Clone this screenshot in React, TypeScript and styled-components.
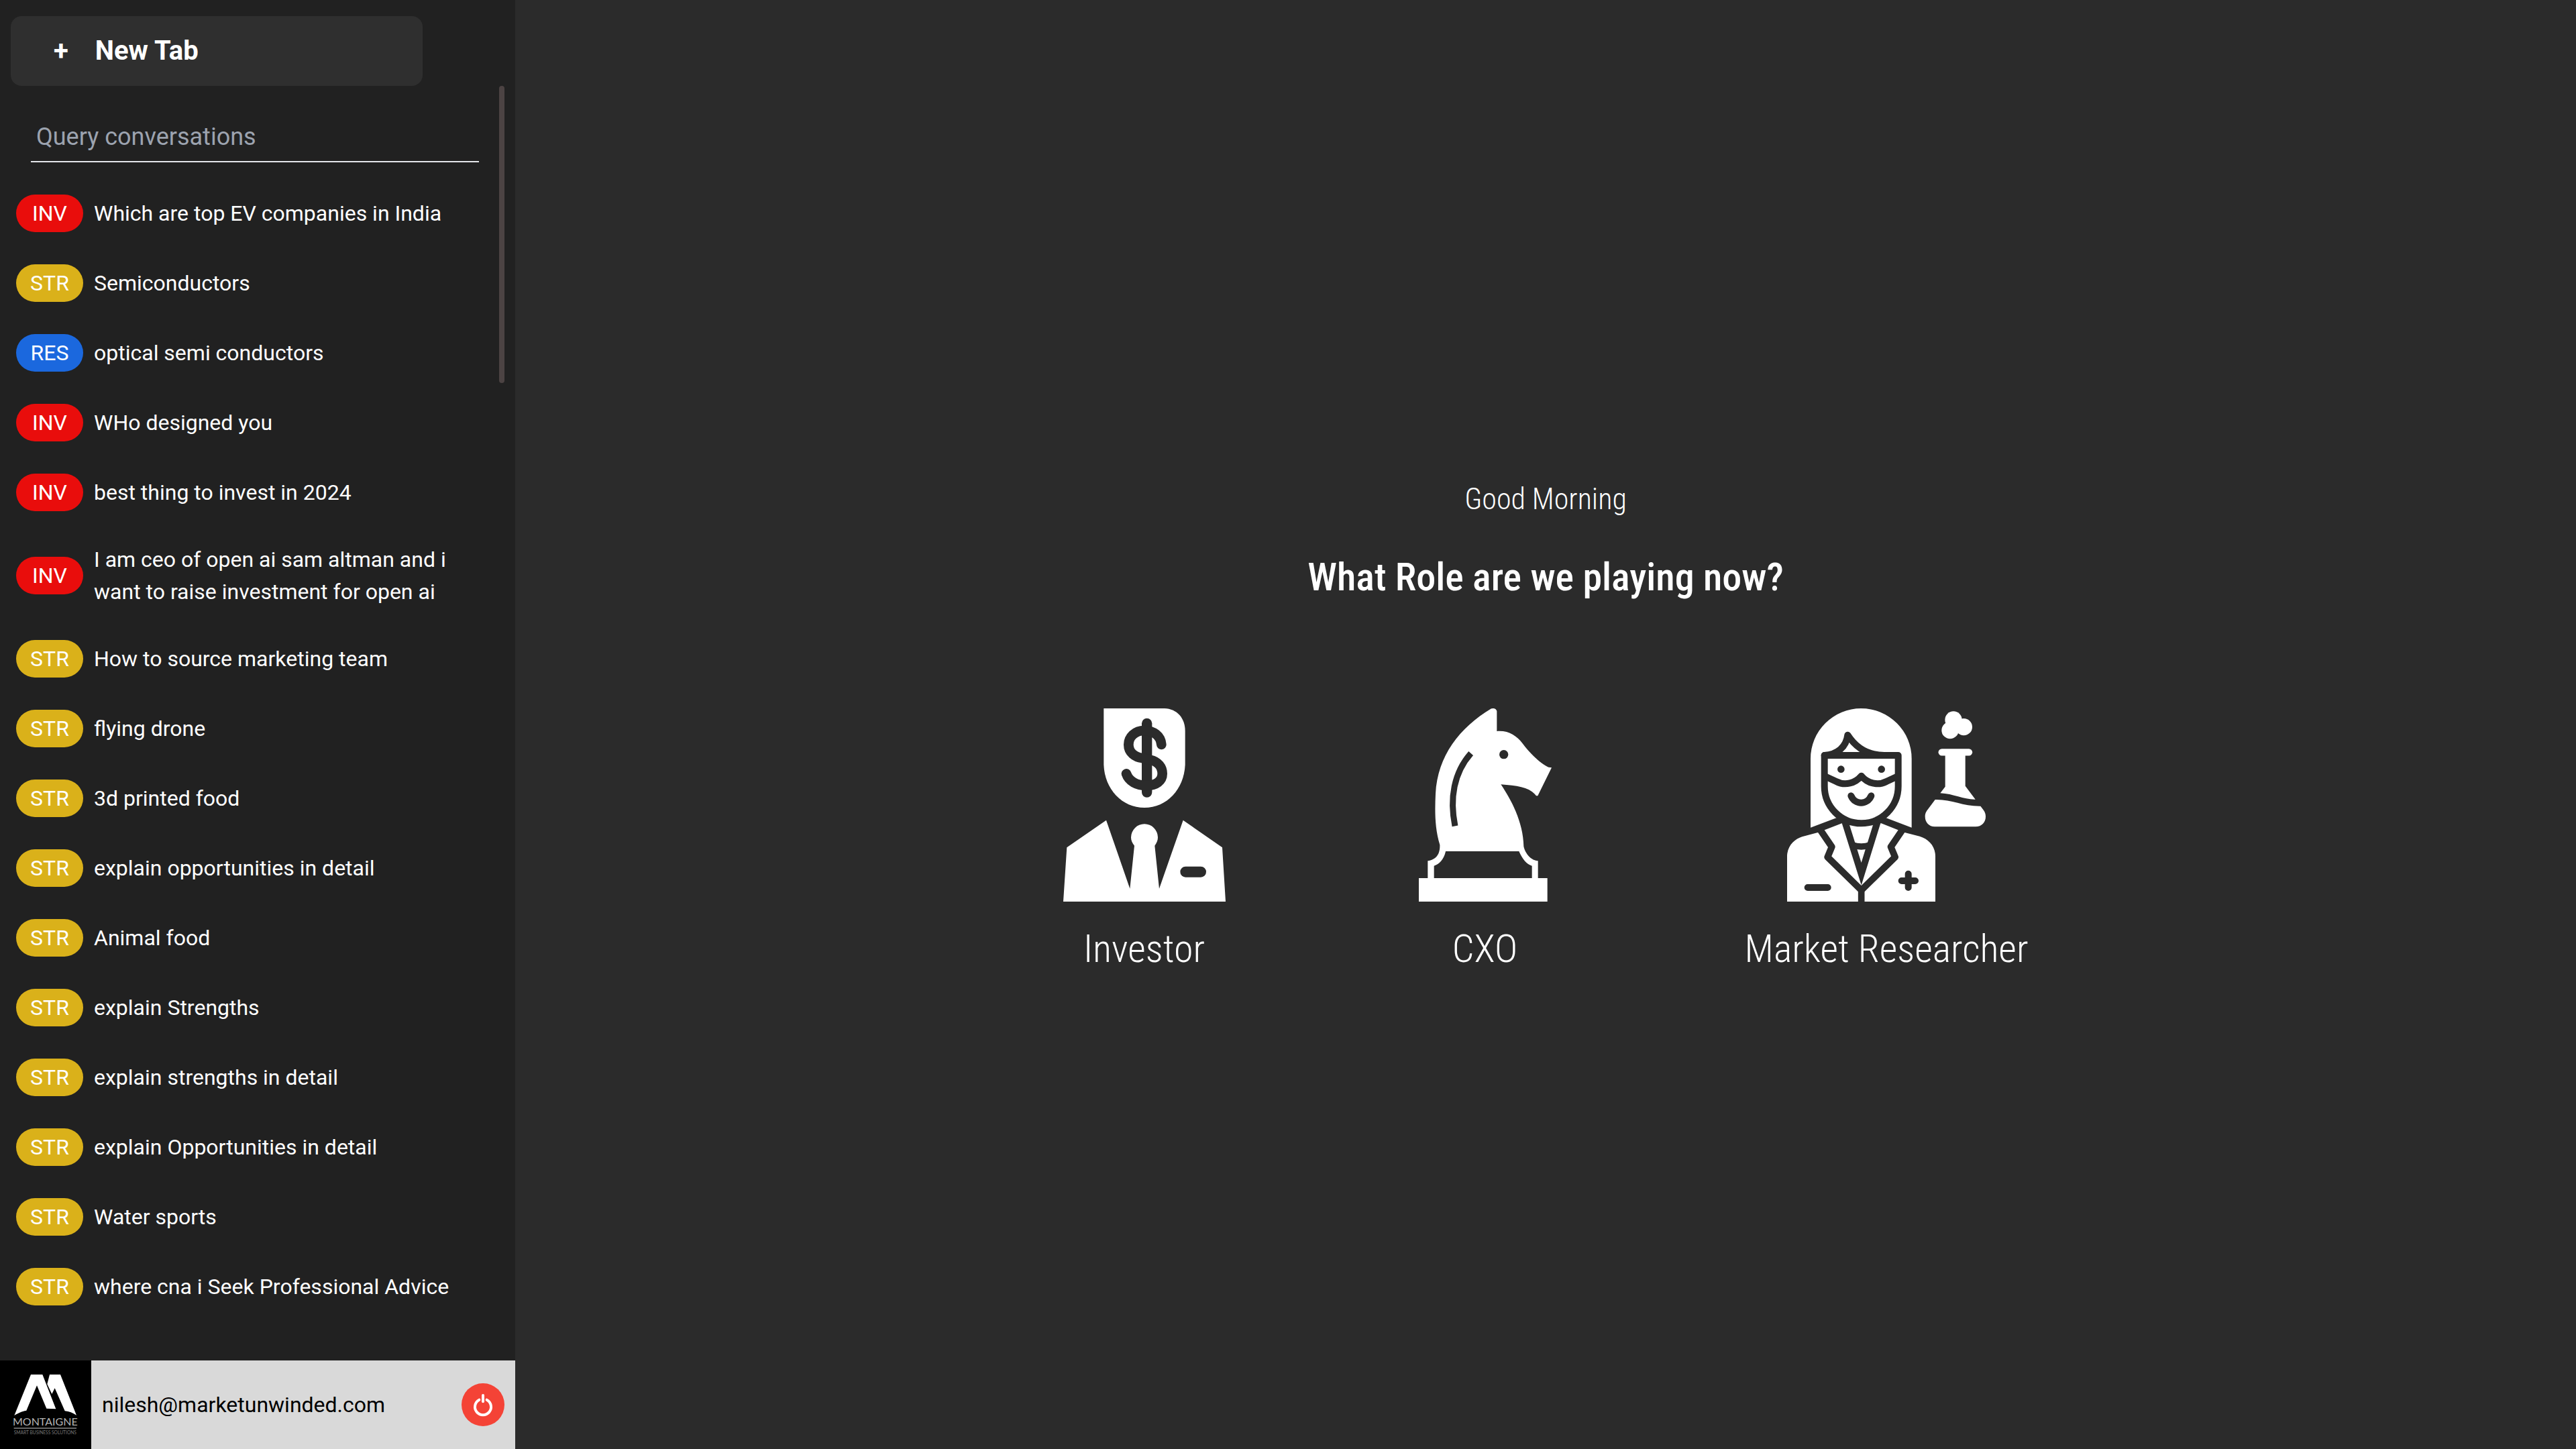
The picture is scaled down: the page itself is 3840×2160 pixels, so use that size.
import React, { useState } from "react";
import styled, { createGlobalStyle } from "styled-components";

type Role = "INV" | "STR" | "RES";

const roleColors: Record<Role, string> = {
  INV: "#e90d0c",
  STR: "#dab11a",
  RES: "#1b68de",
};

const conversations: { role: Role; title: string }[] = [
  { role: "INV", title: "Which are top EV companies in India" },
  { role: "STR", title: "Semiconductors" },
  { role: "RES", title: "optical semi conductors" },
  { role: "INV", title: "WHo designed you" },
  { role: "INV", title: "best thing to invest in 2024" },
  { role: "INV", title: "I am ceo of open ai sam altman and i want to raise investment for open ai" },
  { role: "STR", title: "How to source marketing team" },
  { role: "STR", title: "flying drone" },
  { role: "STR", title: "3d printed food" },
  { role: "STR", title: "explain opportunities in detail" },
  { role: "STR", title: "Animal food" },
  { role: "STR", title: "explain Strengths" },
  { role: "STR", title: "explain strengths in detail" },
  { role: "STR", title: "explain Opportunities in detail" },
  { role: "STR", title: "Water sports" },
  { role: "STR", title: "where cna i Seek Professional Advice" },
];

const surface = "#2b2b2b";

const GlobalStyle = createGlobalStyle`
  *, *::before, *::after { box-sizing: border-box; }
  body {
    margin: 0;
    background: ${surface};
    color: #fff;
    font-family: Roboto, "Liberation Sans", sans-serif;
  }
  button, input { font: inherit; color: inherit; }
  button { border: 0; background: none; padding: 0; cursor: pointer; }
`;

const Page = styled.div`
  display: flex;
  height: 100vh;
`;

const Sidebar = styled.aside`
  display: flex;
  flex-direction: column;
  width: 20%;
  background: #212121;
`;

const NewTabBar = styled.div`
  padding: 24px 16px 0;
`;

const NewTabButton = styled.button`
  display: flex;
  align-items: center;
  gap: 40px;
  width: 614px;
  max-width: 100%;
  height: 104px;
  padding: 0 64px;
  border-radius: 16px;
  background: #2f2f2f;
  font-size: 40px;
  font-weight: 700;
  line-height: 56px;
`;

const History = styled.div`
  display: flex;
  flex: 1;
  min-height: 0;
  padding-right: 16px;
`;

const HistoryContent = styled.div`
  flex: 1;
  min-width: 0;
  overflow: hidden;
`;

const SearchBox = styled.div`
  padding: 40px 30px 24px 46px;
`;

const SearchInput = styled.input`
  display: block;
  width: 100%;
  height: 74px;
  padding: 0 8px;
  border: 0;
  border-bottom: 2px solid #e5e7eb;
  outline: 0;
  background: transparent;
  font-size: 36px;

  &::placeholder {
    color: #9ca3af;
    opacity: 1;
  }
`;

const ConversationList = styled.ul`
  margin: 0;
  padding: 0;
  list-style: none;
`;

const ConversationButton = styled.button`
  display: flex;
  align-items: center;
  gap: 16px;
  width: 100%;
  padding: 24px 64px 24px 24px;
  text-align: left;
`;

const RoleBadge = styled.span<{ $role: Role }>`
  flex: none;
  width: 100px;
  border-radius: 28px;
  background: ${(p) => roleColors[p.$role]};
  font-size: 32px;
  line-height: 56px;
  text-align: center;
`;

const ConversationTitle = styled.span`
  font-size: 32px;
  line-height: 48px;
`;

const ScrollThumb = styled.div`
  width: 8px;
  height: 443px;
  border-radius: 4px;
  background: #4c4343;
`;

const Account = styled.footer`
  display: flex;
  align-items: center;
  height: 132px;
  padding-right: 16px;
  background: #d9d9d9;
  color: #000;
`;

const BrandLogo = styled.svg`
  flex: none;
  width: 136px;
  height: 132px;
`;

const Email = styled.span`
  flex: 1;
  padding-left: 16px;
  font-size: 32px;
  line-height: 48px;
`;

const PowerButton = styled.button`
  width: 64px;
  height: 64px;
  border-radius: 50%;
  background: #f44336;

  svg {
    display: block;
  }
`;

const Main = styled.main`
  display: flex;
  flex: 1;
  flex-direction: column;
  align-items: center;
  justify-content: center;
  font-family: "Roboto Condensed", Roboto, sans-serif;
  font-weight: 300;
`;

const Greeting = styled.p`
  margin: 0 0 42px;
  font-size: 44px;
  line-height: 64px;
`;

const Question = styled.h1`
  margin: 0 0 154px;
  font-size: 58px;
  font-weight: 500;
  line-height: 84px;
`;

const Roles = styled.div`
  display: flex;
  gap: 288px;
`;

const RoleButton = styled.button`
  display: flex;
  flex-direction: column;
  align-items: center;
  gap: 36px;
  font-size: 58px;
  line-height: 68px;

  svg {
    display: block;
    height: 288px;
  }
`;

const InvestorIcon = () => (
  <svg width="242" height="288" viewBox="72 78 726 864" fill="#fff" aria-hidden="true">
    <path d="M253 78H525C580 80 617 120 617 180V330C612 440 535 522 435 522S257 440 253 330Z" />
    <g fill="none" stroke={surface} strokeLinecap="round" strokeLinejoin="round">
      <path d="M446 145V453" strokeWidth="46" />
      <path
        d="M511 240C508 200 475 177 435 177C392 177 364 206 364 240C364 275 392 296 425 300L460 308C497 316 515 342 515 370C515 402 488 423 445 423C400 423 365 403 354 370"
        strokeWidth="44"
      />
    </g>
    <path d="M72 942L88 700L264 578L370 884L390 692C380 680 375 668 375 655A60 60 0 0 1 495 655C495 668 490 680 481 692L501 884L608 578L783 700L798 942Z" />
    <path d="M619 809H687" stroke={surface} strokeWidth="48" strokeLinecap="round" />
  </svg>
);

const KnightIcon = () => (
  <svg width="198" height="288" viewBox="108 78 594 864" fill="#fff" aria-hidden="true">
    <path d="M432 79Q452 74 457 90V180C510 176 545 200 572 235C600 275 655 328 688 341L702 343L640 469H633C605 430 550 424 475 418C520 485 575 585 577 695C582 720 605 758 641 760V837H683V942H108V837H148V760C185 755 204 730 202 688C178 610 180 530 183 460C192 290 290 165 432 79Z" />
    <path d="M228 717H556C570 750 590 775 614 782V837H176V782C200 775 222 750 228 717Z" fill={surface} />
    <path d="M341 279C265 365 245 480 270 604" fill="none" stroke={surface} strokeWidth="27" />
    <circle cx="488" cy="284" r="20" fill={surface} />
  </svg>
);

const ResearcherIcon = () => (
  <svg width="296" height="288" viewBox="255 78 888 864" fill="#fff" aria-hidden="true">
    <path d="M360 611V303a226 225 0 0 1 452 0V611L698 568H475Z" />
    <path d="M255 942V735C258 690 290 662 322 652L395 632L500 592H676L778 632L848 650C890 663 918 695 918 740V942Z" />
    <g fill="none" stroke={surface} strokeWidth="30">
      <path d="M514 586L587 818L659 586" />
      <path d="M545 688Q587 704 628 688" strokeWidth="28" />
      <g strokeLinejoin="round">
        <path d="M404 622L455 697L436 743L587 891L738 743L719 697L770 622" />
        <path d="M587 885V950" strokeWidth="29" />
      </g>
    </g>
    <g fill="none" stroke={surface} strokeWidth="30" strokeLinecap="round" strokeLinejoin="round">
      <path d="M422 288H752V426A165 166 0 0 1 422 426Z" fill="#fff" />
      <path d="M422 288C480 284 520 250 526 197C560 250 610 288 690 288" fill="none" />
      <path d="M428 383L475 405C515 426 560 412 587 380C614 412 659 426 699 405L746 383" />
      <path d="M541 469C560 511 612 511 631 469" />
      <path d="M347 879H437M767 849H828M797 818V879" />
    </g>
    <circle cx="496" cy="350" r="16" fill={surface} />
    <circle cx="677" cy="350" r="16" fill={surface} />
    <circle cx="999" cy="129" r="38" />
    <circle cx="1045" cy="161" r="38" />
    <circle cx="984" cy="176" r="38" />
    <path d="M947 274H1068" stroke="#fff" strokeWidth="31" strokeLinecap="round" />
    <path d="M962 285H1052V425L1097 485C1045 486 1000 460 940 457L962 428Z" />
    <path d="M917 486C990 484 1040 516 1120 515L1132 531C1140 541 1143 550 1143 562C1143 588 1125 607 1098 607H915C890 607 872 588 872 562C872 547 877 539 884 530Z" />
  </svg>
);

const roles = [
  { label: "Investor", Icon: InvestorIcon },
  { label: "CXO", Icon: KnightIcon },
  { label: "Market Researcher", Icon: ResearcherIcon },
];

const MontaigneLogo = () => (
  <BrandLogo viewBox="0 24 408 396" role="img" aria-label="Montaigne Smart Business Solutions">
    <rect y="24" width="408" height="396" fill="#000" />
    <g fill="#fff">
      <path d="M64 270L138 87H190L250 241L208 239L165 136L118 248C95 252 80 260 64 270Z" />
      <path d="M222 87H270L342 269C325 258 310 252 290 250L245 148L232 174L211 130Z" />
    </g>
    <text x="202" y="316" fill="#b4b4b4" fontFamily="Lato, sans-serif" fontSize="48" textAnchor="middle">
      MONTAIGNE
    </text>
    <path d="M62 327H342" stroke="#666" strokeWidth="6" />
    <text x="202" y="355" fill="#777" fontFamily="Lato, sans-serif" fontSize="20" textAnchor="middle">
      SMART BUSINESS SOLUTIONS
    </text>
  </BrandLogo>
);

export default function App() {
  const [query, setQuery] = useState("");
  const visible = conversations.filter((c) => c.title.toLowerCase().includes(query.toLowerCase()));

  return (
    <Page>
      <GlobalStyle />
      <Sidebar>
        <NewTabBar>
          <NewTabButton type="button">
            <span>+</span>
            <span>New Tab</span>
          </NewTabButton>
        </NewTabBar>
        <History>
          <HistoryContent>
            <SearchBox>
              <SearchInput
                type="text"
                aria-label="Query conversations"
                placeholder="Query conversations"
                value={query}
                onChange={(e) => setQuery(e.target.value)}
              />
            </SearchBox>
            <ConversationList>
              {visible.map((c) => (
                <li key={c.title}>
                  <ConversationButton type="button">
                    <RoleBadge $role={c.role}>{c.role}</RoleBadge>
                    <ConversationTitle>{c.title}</ConversationTitle>
                  </ConversationButton>
                </li>
              ))}
            </ConversationList>
          </HistoryContent>
          <ScrollThumb />
        </History>
        <Account>
          <MontaigneLogo />
          <Email>nilesh@marketunwinded.com</Email>
          <PowerButton type="button" aria-label="Log out">
            <svg width="64" height="64" viewBox="0 0 192 192" fill="none" stroke="#fff" strokeWidth="12" strokeLinecap="round">
              <path d="M96 54V82" />
              <path d="M79 74A36 36 0 1 0 113 74" />
            </svg>
          </PowerButton>
        </Account>
      </Sidebar>
      <Main>
        <Greeting>Good Morning</Greeting>
        <Question>What Role are we playing now?</Question>
        <Roles>
          {roles.map(({ label, Icon }) => (
            <RoleButton key={label} type="button">
              <Icon />
              <span>{label}</span>
            </RoleButton>
          ))}
        </Roles>
      </Main>
    </Page>
  );
}
